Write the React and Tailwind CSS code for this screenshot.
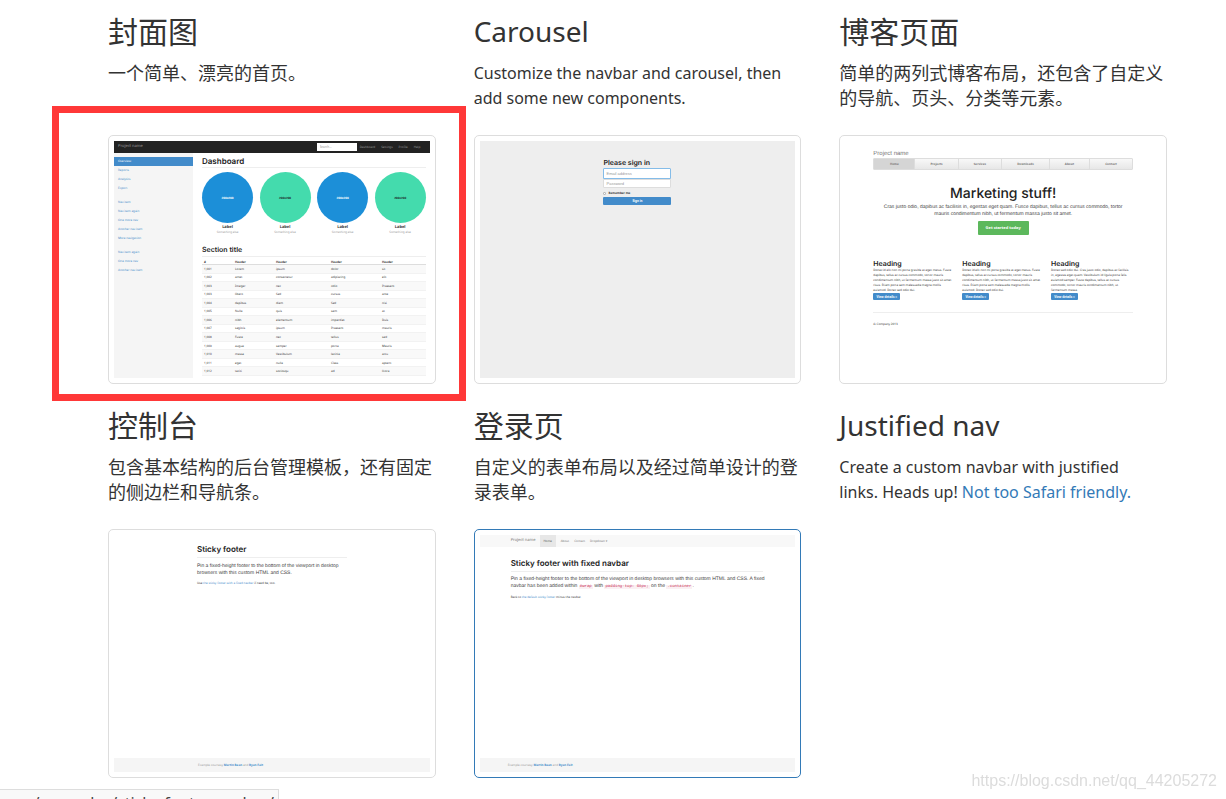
import clsx from "clsx";

const sidebarGroups = [
  ["Overview", "Reports", "Analytics", "Export"],
  ["Nav item", "Nav item again", "One more nav", "Another nav item", "More navigation"],
  ["Nav item again", "One more nav", "Another nav item"],
];

const tableRows = [
  ["1,001", "Lorem", "ipsum", "dolor", "sit"],
  ["1,002", "amet", "consectetur", "adipiscing", "elit"],
  ["1,003", "Integer", "nec", "odio", "Praesent"],
  ["1,003", "libero", "Sed", "cursus", "ante"],
  ["1,004", "dapibus", "diam", "Sed", "nisi"],
  ["1,005", "Nulla", "quis", "sem", "at"],
  ["1,006", "nibh", "elementum", "imperdiet", "Duis"],
  ["1,007", "sagittis", "ipsum", "Praesent", "mauris"],
  ["1,008", "Fusce", "nec", "tellus", "sed"],
  ["1,009", "augue", "semper", "porta", "Mauris"],
  ["1,010", "massa", "Vestibulum", "lacinia", "arcu"],
  ["1,011", "eget", "nulla", "Class", "aptent"],
  ["1,012", "taciti", "sociosqu", "ad", "litora"],
];

const marketingColumns = [
  [
    "Donec id elit non mi porta gravida at eget metus. Fusce",
    "dapibus, tellus ac cursus commodo, tortor mauris",
    "condimentum nibh, ut fermentum massa justo sit amet",
    "risus. Etiam porta sem malesuada magna mollis",
    "euismod. Donec sed odio dui.",
  ],
  [
    "Donec id elit non mi porta gravida at eget metus. Fusce",
    "dapibus, tellus ac cursus commodo, tortor mauris",
    "condimentum nibh, ut fermentum massa justo sit amet",
    "risus. Etiam porta sem malesuada magna mollis",
    "euismod. Donec sed odio dui.",
  ],
  [
    "Donec sed odio dui. Cras justo odio, dapibus ac facilisis",
    "in, egestas eget quam. Vestibulum id ligula porta felis",
    "euismod semper. Fusce dapibus, tellus ac cursus",
    "commodo, tortor mauris condimentum nibh, ut",
    "fermentum massa.",
  ],
];

const heading = "font-['Inter',sans-serif] font-semibold text-[#222]";
const lead = "font-['Liberation_Sans',sans-serif] text-[5px] leading-[7px] whitespace-nowrap text-[#444]";

function DashboardPreview() {
  return (
    <div className="flex h-full flex-col">
      {/* Navbar */}
      <div className="flex h-3 shrink-0 items-center bg-[#222] px-1 text-[#999]">
        <span className="flex-1 text-[4px]">Project name</span>
        <input
          aria-label="Search"
          placeholder="Search..."
          className="mr-[3px] h-2 w-10 bg-white px-[3px] text-[3px] placeholder:text-[#999]"
        />
        <nav className="flex w-[66px] gap-[6px]">
          <a href="#dashboard">Dashboard</a>
          <a href="#settings">Settings</a>
          <a href="#profile">Profile</a>
          <a href="#help">Help</a>
        </nav>
      </div>

      <div className="flex min-h-0 flex-1">
        {/* Sidebar */}
        <aside className="flex w-[79px] shrink-0 flex-col gap-[5px] bg-[#f5f5f5] pt-1 text-[#428bca]">
          {sidebarGroups.map((group, i) => (
            <ul key={i}>
              {group.map((item) => (
                <li key={item}>
                  <a
                    href="#nav"
                    className={clsx(
                      "block h-[9px] pl-1 leading-[9px]",
                      item === "Overview" && "bg-[#428bca] text-white"
                    )}
                  >
                    {item}
                  </a>
                </li>
              ))}
            </ul>
          ))}
        </aside>

        {/* Main */}
        <div className="min-w-0 flex-1 overflow-hidden pt-[3px] pr-1 pl-[9px]">
          <h3 className={`${heading} border-b border-[#eee] pb-[1px] text-[8px] leading-[10px]`}>
            Dashboard
          </h3>
          <div className="mt-1 flex justify-between">
            {[0, 1, 2, 3].map((i) => (
              <div key={i} className="text-center">
                <div
                  className={clsx(
                    "flex size-[51px] items-center justify-center rounded-full font-bold",
                    i % 2 ? "bg-[#44dbad] text-[#1e292c]" : "bg-[#1c8fd8] text-white"
                  )}
                >
                  200x200
                </div>
                <p className="mt-[2px] text-[4px] leading-[5px] font-bold">Label</p>
                <p className="leading-[4px] text-[#999]">Something else</p>
              </div>
            ))}
          </div>
          <h4 className={`${heading} mt-[11px] text-[7px] leading-[10px]`}>Section title</h4>
          <table className="mt-[1px] h-[120px] w-full table-fixed border-t border-[#eee] text-left">
            <colgroup>
              <col className="w-[31px]" />
              <col className="w-[41px]" />
              <col className="w-[55px]" />
              <col className="w-[51px]" />
              <col />
            </colgroup>
            <thead>
              <tr className="border-b border-[#ddd]">
                {["#", "Header", "Header", "Header", "Header"].map((name, i) => (
                  <th key={i} className="px-[2px] pt-[3px]">{name}</th>
                ))}
              </tr>
            </thead>
            <tbody>
              {tableRows.map((row, i) => (
                <tr key={i} className="border-b border-[#f2f2f2] odd:bg-[#f9f9f9]">
                  {row.map((cell, j) => (
                    <td key={j} className="px-[2px]">{cell}</td>
                  ))}
                </tr>
              ))}
            </tbody>
          </table>
        </div>
      </div>
    </div>
  );
}

function SignInPreview() {
  return (
    <div className="flex h-full justify-center bg-[#eee] pt-[17px]">
      <form className="w-[68px]">
        <h3 className={`${heading} text-[7px] leading-[10px]`}>Please sign in</h3>
        <input
          aria-label="Email address"
          placeholder="Email address"
          className="block h-[11px] w-full rounded-t-[1px] border border-[#84bce8] bg-white px-[2px] font-['Liberation_Sans',sans-serif] text-[4px] placeholder:text-[#999]"
        />
        <input
          type="password"
          aria-label="Password"
          placeholder="Password"
          className="block h-[9px] w-full rounded-b-[1px] border border-[#ddd] bg-white px-[2px] font-['Liberation_Sans',sans-serif] text-[4px] placeholder:text-[#999]"
        />
        <label className="mt-[3px] flex h-[4px] items-center gap-[2px] font-bold">
          <input type="checkbox" className="size-[3px] appearance-none rounded-[1px] border border-[#bbb] bg-white" />
          Remember me
        </label>
        <button type="button" className="mt-[2px] block h-2 w-full rounded-[1px] bg-[#428bca] font-bold text-white">
          Sign in
        </button>
      </form>
    </div>
  );
}

function JustifiedPreview() {
  return (
    <div className="h-full px-7 pt-[9px]">
      <p className="font-['Liberation_Sans',sans-serif] text-[6px] leading-[8px] text-[#777]">Project name</p>
      <nav className="flex h-3 rounded-[1px] border border-[#ddd] bg-linear-to-b from-[#f8f8f8] to-[#e7e7e7] leading-[10px] font-bold text-[#777]">
        <a href="#home" className="w-10 bg-[#d5d5d5] text-center">Home</a>
        {["Projects", "Services", "Downloads", "About", "Contact"].map((item) => (
          <a key={item} href="#nav" className="flex-auto border-l border-[#ddd] text-center">{item}</a>
        ))}
      </nav>
      <div className="mt-[14px] text-center">
        <h3 className="font-['Inter',sans-serif] text-[14px] leading-[20px] font-medium text-[#222]">Marketing stuff!</h3>
        <p className={lead}>
          Cras justo odio, dapibus ac facilisis in, egestas eget quam. Fusce dapibus, tellus ac cursus commodo, tortor
          <br />
          mauris condimentum nibh, ut fermentum massa justo sit amet.
        </p>
        <button type="button" className="mt-[3px] h-[14px] w-[51px] rounded-[1px] bg-[#5cb85c] text-[4px] font-bold text-white">
          Get started today
        </button>
      </div>
      <div className="mt-[24px] grid grid-cols-3 gap-x-[7px]">
        {marketingColumns.map((lines, i) => (
          <div key={i}>
            <h4 className={`${heading} text-[7px] leading-[9px]`}>Heading</h4>
            <p className="leading-[5px] whitespace-nowrap">
              {lines.map((line) => (
                <span key={line} className="block">{line}</span>
              ))}
            </p>
            <button type="button" className="block h-[7px] w-[27px] rounded-[1px] bg-[#428bca] font-bold text-white">
              View details »
            </button>
          </div>
        ))}
      </div>
      <p className="mt-3 border-t border-[#eee] pt-[9px] leading-[4px]">© Company 2013</p>
    </div>
  );
}

function PreviewFooter({ className }) {
  return (
    <footer className={clsx("mt-auto h-[14px] bg-[#f5f5f5] leading-[14px] text-[#999]", className)}>
      Example courtesy <a href="#martin" className="font-bold text-[#428bca]">Martin Bean</a> and{" "}
      <a href="#ryan" className="font-bold text-[#428bca]">Ryan Fait</a>.
    </footer>
  );
}

function StickyFooterPreview() {
  return (
    <div className="flex h-full flex-col">
      <div className="mx-[83px] pt-2">
        <h3 className={`${heading} border-b border-[#eee] pb-[2px] text-[8px] leading-3`}>Sticky footer</h3>
        <p className={`${lead} mt-[5px]`}>
          Pin a fixed-height footer to the bottom of the viewport in desktop
          <br />
          browsers with this custom HTML and CSS.
        </p>
        <p className="mt-1 leading-[4px]">
          Use <a href="#fixed" className="text-[#428bca]">the sticky footer with a fixed navbar</a> if need be, too.
        </p>
      </div>
      <PreviewFooter className="pl-[84px]" />
    </div>
  );
}

function StickyNavbarPreview() {
  const code = "bg-[#fbf0f3] px-[1px] font-['Liberation_Mono',monospace] text-[4px] text-[#c7254e]";

  return (
    <div className="flex h-full flex-col">
      <nav className="flex h-3 shrink-0 items-center gap-[5px] bg-[#f8f8f8] pl-[31px] leading-3 text-[#777]">
        <span className="w-6 text-[4px] whitespace-nowrap">Project name</span>
        <a href="#home" className="w-4 bg-[#e7e7e7] text-center text-[#555]">Home</a>
        <a href="#about">About</a>
        <a href="#contact">Contact</a>
        <a href="#dropdown">Dropdown ▾</a>
      </nav>
      <div className="mr-8 ml-[31px] pt-[10px]">
        <h3 className={`${heading} border-b border-[#eee] pb-[2px] text-[8px] leading-3`}>
          Sticky footer with fixed navbar
        </h3>
        <p className={`${lead} mt-1`}>
          Pin a fixed-height footer to the bottom of the viewport in desktop browsers with this custom HTML and CSS. A fixed
          <br />
          navbar has been added within <code className={code}>#wrap</code> with{" "}
          <code className={code}>padding-top: 60px;</code> on the <code className={code}>.container</code>.
        </p>
        <p className="mt-1 leading-[4px]">
          Back to <a href="#default" className="text-[#428bca]">the default sticky footer</a> minus the navbar.
        </p>
      </div>
      <PreviewFooter className="pl-7" />
    </div>
  );
}

// Latin captions run wider than the Chinese ones, so they get smaller sizes
function Caption({ title, latin, children }) {
  return (
    <div className="text-[#333]">
      <h2 className={clsx("mb-[13px] leading-[33px]", latin ? "text-[28px]" : "text-[30px]")}>{title}</h2>
      <p className={clsx("min-h-[50px] leading-[25px]", latin ? "pr-2 text-[16px]" : "text-[18px]")}>
        {children}
      </p>
    </div>
  );
}

function Thumbnail({ active, marked, children }) {
  return (
    <div
      className={clsx(
        "relative mt-6 rounded-[5px] border bg-white p-[5px]",
        active ? "border-[#337ab7]" : "border-[#ddd]"
      )}
    >
      <div className="h-[237px] overflow-hidden font-['Noto_Sans',sans-serif] text-[3px] leading-[4px] text-[#333] [text-rendering:geometricPrecision]">
        {children}
      </div>
      {marked && (
        <div className="pointer-events-none absolute -top-[30px] -right-[31px] -bottom-[18px] -left-[57px] border-[7px] border-[#ff3838]" />
      )}
    </div>
  );
}

function App() {
  return (
    <div className="bg-white font-['Noto_Sans','Noto_Sans_CJK_SC',sans-serif]">
      <main className="grid grid-cols-3 gap-x-[38px] gap-y-[25px] pt-[15px] pr-[59px] pl-[108px]">
        <section>
          <Caption title="封面图">一个简单、漂亮的首页。</Caption>
          <Thumbnail marked>
            <DashboardPreview />
          </Thumbnail>
        </section>
        <section>
          <Caption latin title="Carousel">Customize the navbar and carousel, then add some new components.</Caption>
          <Thumbnail>
            <SignInPreview />
          </Thumbnail>
        </section>
        <section>
          <Caption title="博客页面">简单的两列式博客布局，还包含了自定义的导航、页头、分类等元素。</Caption>
          <Thumbnail>
            <JustifiedPreview />
          </Thumbnail>
        </section>
        <section>
          <Caption title="控制台">包含基本结构的后台管理模板，还有固定的侧边栏和导航条。</Caption>
          <Thumbnail>
            <StickyFooterPreview />
          </Thumbnail>
        </section>
        <section>
          <Caption title="登录页">自定义的表单布局以及经过简单设计的登录表单。</Caption>
          <Thumbnail active>
            <StickyNavbarPreview />
          </Thumbnail>
        </section>
        <section>
          <Caption latin title="Justified nav">
            Create a custom navbar with justified links. Heads up!{" "}
            <a href="#safari" className="text-[#337ab7]">Not too Safari friendly.</a>
          </Caption>
        </section>
      </main>

      {/* Link address shown by the browser */}
      <div className="fixed bottom-0 left-0 flex h-[10px] w-[279px] justify-end overflow-hidden border-t border-r border-[#ddd] bg-[#f9f9f9] pt-[3px] pr-1 text-[16px] leading-5 whitespace-nowrap text-[#444]">
        v3.bootcss.com/examples/sticky-footer-navbar/
      </div>

      {/* Watermark */}
      <div className="fixed right-[9px] bottom-2 font-['Liberation_Sans',sans-serif] text-[16px] leading-5 text-[#dcdcdc]">
        https://blog.csdn.net/qq_44205272
      </div>
    </div>
  );
}

export default App;
